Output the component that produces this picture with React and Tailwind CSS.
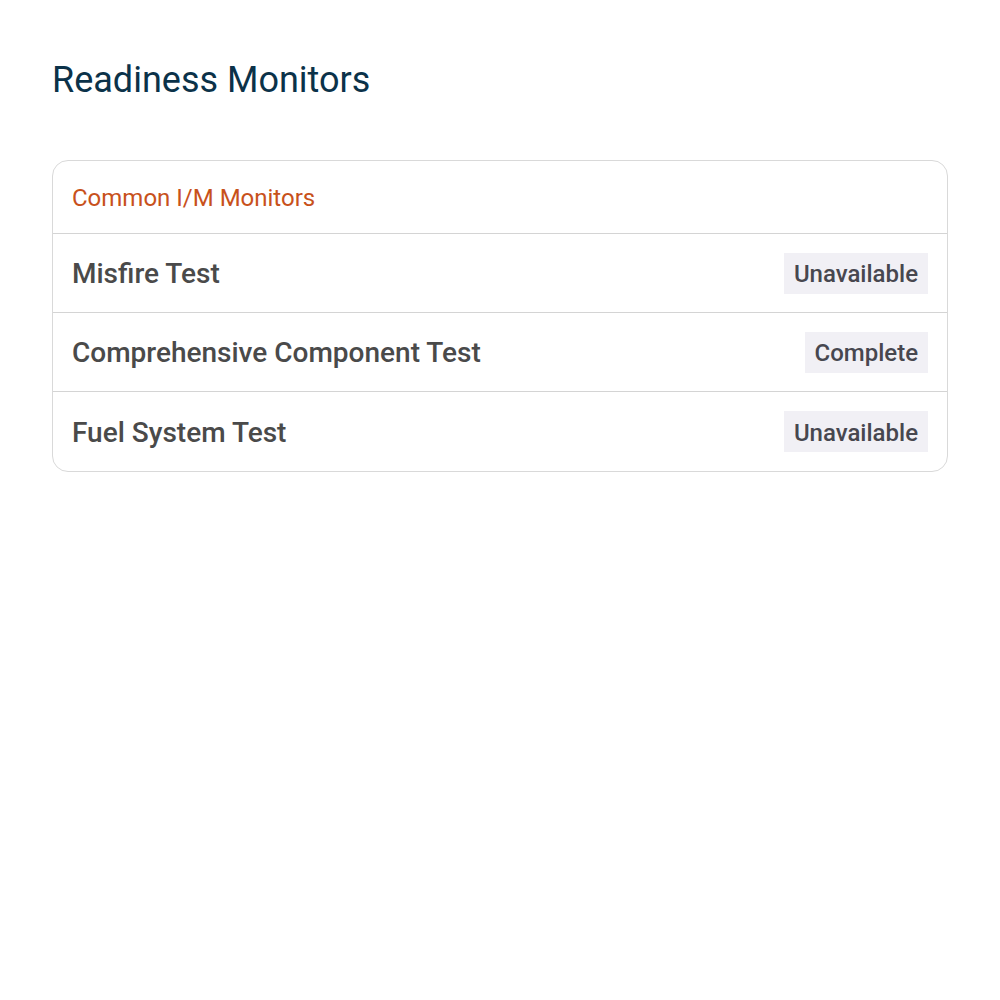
const monitors = [
  { name: "Misfire Test", status: "Unavailable" },
  { name: "Comprehensive Component Test", status: "Complete" },
  { name: "Fuel System Test", status: "Unavailable" },
];

export default function App() {
  return (
    <div className="min-h-screen bg-white px-[52px] pt-[58px]" style={{ fontFamily: "Roboto, sans-serif" }}>
      <h1 className="text-[36px] leading-[44px] font-normal text-[#0b3249]">Readiness Monitors</h1>

      <div className="mt-[58px] rounded-[16px] border border-[#d9d9d9] overflow-hidden">
        {/* Section header */}
        <div className="h-[73px] flex items-center px-[19px] pt-[1px] border-b border-[#d4d4d4]">
          <span className="text-[24px] text-[#c8511b]">Common I/M Monitors</span>
        </div>

        {monitors.map((m, i) => (
          <div
            key={m.name}
            className={`h-[79px] flex items-center justify-between px-[19px] ${
              i < monitors.length - 1 ? "border-b border-[#d4d4d4]" : ""
            }`}
          >
            <span className="pt-[2px] text-[28px] font-medium text-[#4a4a4a]">{m.name}</span>
            <span className="h-[41px] flex items-center pt-[2px] px-[10px] bg-[#f1f0f5] text-[24px] font-medium text-[#47474f]">
              {m.status}
            </span>
          </div>
        ))}
      </div>
    </div>
  );
}
